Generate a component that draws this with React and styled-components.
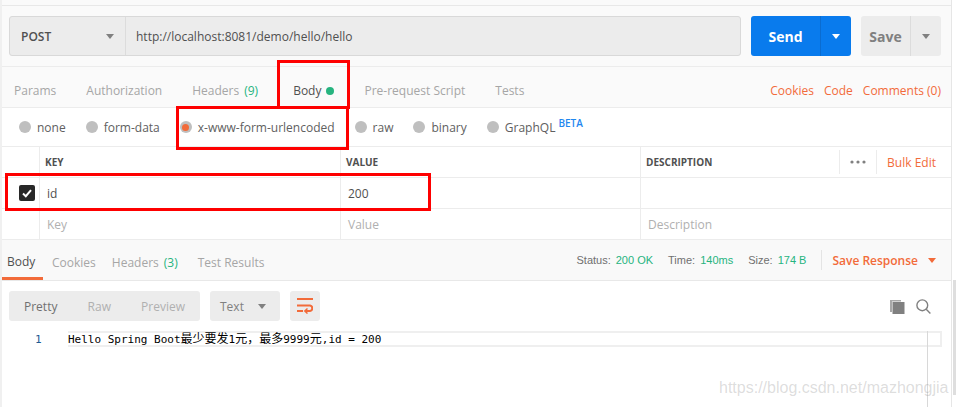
import React from 'react'
import styled, { createGlobalStyle } from 'styled-components'

const GlobalStyle = createGlobalStyle`
  html, body {
    margin: 0;
    padding: 0;
    background: #fff;
  }
  * {
    box-sizing: border-box;
  }
`

const Page = styled.div`
  position: relative;
  width: 956px;
  height: 407px;
  overflow: hidden;
  background: #fff;
  font-family: "Open Sans", "Noto Sans", sans-serif;
  font-size: 12px;
  color: #808080;
`

const Shell = styled.div`
  width: 952px;
  height: 407px;
  border-right: 1px solid #e6e6e6;
  border-left: 2px solid #f0f0f0;
`

const TopStrip = styled.div`
  height: 6px;
  background: #fafafa;
  border-bottom: 1px solid #e8e8e8;
`

const RequestBar = styled.div`
  display: flex;
  height: 61px;
  padding: 10px 0 0 7px;
  background: #fafafa;
  border-bottom: 1px solid #ececec;
`

const UrlGroup = styled.div`
  display: flex;
  width: 732px;
  height: 40px;
  border: 1px solid #d9d9d9;
  border-radius: 3px;
  background: #ececec;
`

const Method = styled.div`
  display: flex;
  align-items: center;
  justify-content: space-between;
  width: 116px;
  padding: 0 11px 0 11px;
  border-right: 1px solid #dcdcdc;
  font-size: 12px;
  font-weight: 600;
  color: #505050;
`

const UrlText = styled.div`
  display: flex;
  align-items: center;
  padding-left: 10px;
  font-size: 12px;
  color: #505050;
`

const Caret = styled.span`
  display: inline-block;
  width: 0;
  height: 0;
  border-left: 4px solid transparent;
  border-right: 4px solid transparent;
  border-top: 5px solid ${p => p.$color || '#808080'};
`

const SplitButton = styled.div`
  display: flex;
  width: ${p => p.$width}px;
  height: 40px;
  margin-left: 10px;
  border-radius: 3px;
  background: ${p => p.$bg};
  color: ${p => p.$color};
  font-size: 14px;
  font-weight: 700;
`

const SplitLabel = styled.div`
  display: flex;
  flex: 1;
  align-items: center;
  justify-content: center;
  border-right: 1px solid ${p => p.$line};
`

const SplitArrow = styled.div`
  display: flex;
  align-items: center;
  justify-content: center;
  width: 30px;
`

const TabBar = styled.div`
  display: flex;
  align-items: center;
  justify-content: space-between;
  height: 41px;
  padding: 7px 10px 0 12px;
  background: #fafafa;
  border-bottom: 1px solid #ececec;
`

const TabList = styled.div`
  display: flex;
  align-items: center;
  gap: 30px;
`

const Tab = styled.span`
  display: inline-flex;
  align-items: center;
  margin-left: ${p => (p.$active ? '5px' : '0')};
  color: ${p => (p.$active ? '#505050' : '#a6a6a6')};
  font-size: 12px;
`

const Count = styled.span`
  margin-left: 5px;
  color: #26b47f;
`

const Dot = styled.span`
  width: 8px;
  height: 8px;
  margin-left: 5px;
  border-radius: 50%;
  background: #26b47f;
`

const LinkList = styled.div`
  display: flex;
  gap: 10px;
`

const OrangeLink = styled.span`
  color: #f26b3a;
  font-size: 12px;
  font-weight: 400;
`

const RadioRow = styled.div`
  display: flex;
  align-items: center;
  gap: 20px;
  height: 39px;
  padding-left: 17px;
  border-bottom: 1px solid #ececec;
`

const RadioItem = styled.label`
  display: flex;
  align-items: center;
  gap: 6px;
  color: #606060;
  font-size: 12px;
`

const RadioMark = styled.span`
  display: flex;
  align-items: center;
  justify-content: center;
  width: 12px;
  height: 12px;
  border-radius: 50%;
  background: #bfbfbf;

  &::after {
    content: '';
    display: ${p => (p.$on ? 'block' : 'none')};
    width: 7px;
    height: 7px;
    border-radius: 50%;
    background: #f26b3a;
  }
`

const Beta = styled.sup`
  margin: -9px 0 0 -17px;
  color: #1f87ef;
  font-size: 10px;
  font-weight: 600;
  line-height: 10px;
`

const ParamRow = styled.div`
  display: grid;
  grid-template-columns: 38px 301px 300px 1fr;
  height: ${p => p.$height}px;
  border-bottom: 1px solid #ececec;
`

const Cell = styled.div`
  display: flex;
  align-items: center;
  padding-left: ${p => (p.$check ? '17px' : '7px')};
  border-right: ${p => (p.$check || p.$mid ? '1px solid #ececec' : 'none')};
  color: ${p => (p.$ghost ? '#b0b0b0' : '#505050')};
  font-size: 12px;
`

const HeadCell = styled(Cell)`
  justify-content: space-between;
  padding-left: 5px;
  color: #505050;
  font-size: 10px;
  font-weight: 700;
`

const HeadTools = styled.div`
  display: flex;
  align-items: center;
  height: 24px;
  margin-right: 15px;
`

const ToolSlot = styled.div`
  display: flex;
  align-items: center;
  height: 24px;
  padding: 0 ${p => p.$pad}px;
  border-left: 1px solid #ececec;
`

const ToolSlotLast = styled(ToolSlot)`
  padding-right: 0;
`

const CheckBox = styled.span`
  display: flex;
  align-items: center;
  justify-content: center;
  width: 16px;
  height: 16px;
  border-radius: 2px;
  background: #282828;
`

const ResponseHead = styled.div`
  display: flex;
  align-items: center;
  justify-content: space-between;
  height: 41px;
  background: #f9f9f9;
  border-bottom: 1px solid #e8e8e8;
`

const ResponseTabs = styled.div`
  display: flex;
  align-self: stretch;
  gap: 16px;
`

const ResponseTab = styled.span`
  display: flex;
  align-items: center;
  height: 40px;
  padding-top: 5px;
  color: #a6a6a6;
  font-size: 12px;
`

const ResponseTabFirst = styled(ResponseTab)`
  width: 41px;
  margin-right: -7px;
  padding: 5px 0 0 5px;
  border-bottom: 3px solid #f26b3a;
  color: #505050;
`

const ResponseTabLast = styled(ResponseTab)`
  margin-left: 4px;
`

const StatusBar = styled.div`
  display: flex;
  align-items: center;
  margin-right: 15px;
  font-family: "Liberation Sans", Arial, sans-serif;
  font-size: 11px;
`

const StatusLabel = styled.span`
  margin-left: ${p => (p.$first ? '0' : '15px')};
  color: #707070;
`

const StatusValue = styled.span`
  margin-left: 5px;
  color: #26b47f;
`

const SaveResponse = styled.div`
  display: flex;
  align-items: center;
  gap: 10px;
  height: 20px;
  margin-left: 15px;
  padding-left: 10px;
  border-left: 1px solid #e4e4e4;
  color: #f26b3a;
  font-family: "Open Sans", sans-serif;
  font-size: 12px;
  font-weight: 600;
`

const Toolbar = styled.div`
  display: flex;
  align-items: center;
  gap: 10px;
  height: 50px;
  padding: 0 0 0 7px;
`

const Segment = styled.div`
  display: flex;
  align-items: center;
  justify-content: ${p => p.$justify || 'center'};
  width: ${p => p.$width}px;
  height: 30px;
  padding: ${p => p.$padding || 0};
  border-radius: 3px;
  background: #ececec;
  font-size: 12px;
`

const SegmentItem = styled.span`
  color: ${p => (p.$active ? '#707070' : '#b0b0b0')};
`

const TextMode = styled.span`
  color: #808080;
`

const ToolIcons = styled.div`
  display: flex;
  align-items: center;
  gap: 11px;
  margin-left: auto;
  margin-right: 20px;
`

const CodeRow = styled.div`
  display: flex;
  padding-right: 9px;
`

const LineNumber = styled.div`
  width: 66px;
  padding: 3px 0 0 33px;
  color: #1f5a92;
  font-family: "DejaVu Sans Mono", monospace;
  font-size: 11px;
  line-height: 12px;
`

const CodeLine = styled.div`
  flex: 1;
  height: 16px;
  border: 2px solid #efefef;
  border-left: none;
  color: #000;
  font-family: "DejaVu Sans Mono", monospace;
  font-size: 11px;
  line-height: 10px;
  white-space: pre;
`

const Han = styled.span`
  font-family: "Noto Sans CJK SC", sans-serif;
  font-size: 12px;
`

const Ruler = styled.div`
  position: absolute;
  left: 927px;
  top: 331px;
  width: 1px;
  height: 76px;
  background: #d8d8d8;
`

const ScrollEdge = styled.div`
  position: absolute;
  left: 953px;
  top: 280px;
  width: 3px;
  height: 115px;
  background: #dedede;
`

const Watermark = styled.div`
  position: absolute;
  left: 719px;
  top: 379px;
  color: rgba(150, 150, 150, 0.32);
  font-family: "Liberation Sans", Arial, sans-serif;
  font-size: 16px;
  line-height: 18px;
`

const RedBox = styled.div`
  position: absolute;
  left: ${p => p.$x}px;
  top: ${p => p.$y}px;
  width: ${p => p.$w}px;
  height: ${p => p.$h}px;
  border: 3px solid #fe0000;
`

const CheckIcon = () => (
  <svg width="12" height="12" viewBox="0 0 12 12">
    <path d="M2 6.5 L4.8 9.2 L10 3.2" fill="none" stroke="#fff" strokeWidth="2" />
  </svg>
)

const WrapIcon = () => (
  <svg width="16" height="16" viewBox="0 0 16 16" fill="none" stroke="#f26b3a" strokeWidth="2">
    <path d="M0 1 H16" />
    <path d="M0 7.5 H13 A2.8 2.8 0 0 1 13 13 H8" />
    <path d="M10.5 10.5 L7.8 13 L10.5 15.5" strokeWidth="1.5" />
    <path d="M0 13 H6" />
  </svg>
)

const CopyIcon = () => (
  <svg width="15" height="15" viewBox="0 0 15 15">
    <path d="M0 1 H11 V2.5 H2 V13 H0 Z" fill="#a8a8a8" />
    <rect x="2.5" y="3" width="12" height="12" fill="#808080" />
  </svg>
)

const SearchIcon = () => (
  <svg width="15" height="15" viewBox="0 0 15 15" fill="none" stroke="#808080" strokeWidth="1.4">
    <circle cx="6.3" cy="6.3" r="5.4" />
    <path d="M10.2 10.2 L14.4 14.4" />
  </svg>
)

const MoreDots = () => (
  <svg width="16" height="4" viewBox="0 0 16 4" fill="#808080">
    <circle cx="2" cy="2" r="1.6" />
    <circle cx="8" cy="2" r="1.6" />
    <circle cx="14" cy="2" r="1.6" />
  </svg>
)

const App = () => {
  return (
    <Page>
      <GlobalStyle />
      <Shell>
        <TopStrip />
        <RequestBar>
          <UrlGroup>
            <Method>
              POST
              <Caret />
            </Method>
            <UrlText>http://localhost:8081/demo/hello/hello</UrlText>
          </UrlGroup>
          <SplitButton $width={100} $bg="#097bed" $color="#fff">
            <SplitLabel $line="#0a6cd0">Send</SplitLabel>
            <SplitArrow>
              <Caret $color="#fff" />
            </SplitArrow>
          </SplitButton>
          <SplitButton $width={80} $bg="#ececec" $color="#808080">
            <SplitLabel $line="#dcdcdc">Save</SplitLabel>
            <SplitArrow>
              <Caret />
            </SplitArrow>
          </SplitButton>
        </RequestBar>

        <TabBar>
          <TabList>
            <Tab>Params</Tab>
            <Tab>Authorization</Tab>
            <Tab>
              Headers<Count>(9)</Count>
            </Tab>
            <Tab $active>
              Body<Dot />
            </Tab>
            <Tab>Pre-request Script</Tab>
            <Tab>Tests</Tab>
          </TabList>
          <LinkList>
            <OrangeLink>Cookies</OrangeLink>
            <OrangeLink>Code</OrangeLink>
            <OrangeLink>Comments (0)</OrangeLink>
          </LinkList>
        </TabBar>

        <RadioRow>
          <RadioItem><RadioMark />none</RadioItem>
          <RadioItem><RadioMark />form-data</RadioItem>
          <RadioItem><RadioMark $on />x-www-form-urlencoded</RadioItem>
          <RadioItem><RadioMark />raw</RadioItem>
          <RadioItem><RadioMark />binary</RadioItem>
          <RadioItem><RadioMark />GraphQL</RadioItem>
          <Beta>BETA</Beta>
        </RadioRow>

        <ParamRow $height={31}>
          <Cell $check />
          <HeadCell $mid>KEY</HeadCell>
          <HeadCell $mid>VALUE</HeadCell>
          <HeadCell>
            DESCRIPTION
            <HeadTools>
              <ToolSlot $pad={10}><MoreDots /></ToolSlot>
              <ToolSlotLast $pad={10}><OrangeLink>Bulk Edit</OrangeLink></ToolSlotLast>
            </HeadTools>
          </HeadCell>
        </ParamRow>
        <ParamRow $height={31}>
          <Cell $check><CheckBox><CheckIcon /></CheckBox></Cell>
          <Cell $mid>id</Cell>
          <Cell $mid>200</Cell>
          <Cell />
        </ParamRow>
        <ParamRow $height={31}>
          <Cell $check />
          <Cell $mid $ghost>Key</Cell>
          <Cell $mid $ghost>Value</Cell>
          <Cell $ghost>Description</Cell>
        </ParamRow>

        <ResponseHead>
          <ResponseTabs>
            <ResponseTabFirst>Body</ResponseTabFirst>
            <ResponseTab>Cookies</ResponseTab>
            <ResponseTab>Headers<Count>(3)</Count></ResponseTab>
            <ResponseTabLast>Test Results</ResponseTabLast>
          </ResponseTabs>
          <StatusBar>
            <StatusLabel $first>Status:</StatusLabel>
            <StatusValue>200 OK</StatusValue>
            <StatusLabel>Time:</StatusLabel>
            <StatusValue>140ms</StatusValue>
            <StatusLabel>Size:</StatusLabel>
            <StatusValue>174 B</StatusValue>
            <SaveResponse>
              Save Response
              <Caret $color="#f26b3a" />
            </SaveResponse>
          </StatusBar>
        </ResponseHead>

        <Toolbar>
          <Segment $width={191} $justify="space-between" $padding="0 15px">
            <SegmentItem $active>Pretty</SegmentItem>
            <SegmentItem>Raw</SegmentItem>
            <SegmentItem>Preview</SegmentItem>
          </Segment>
          <Segment $width={70} $justify="space-between" $padding="0 14px 0 10px">
            <TextMode>Text</TextMode>
            <Caret />
          </Segment>
          <Segment $width={30}><WrapIcon /></Segment>
          <ToolIcons>
            <CopyIcon />
            <SearchIcon />
          </ToolIcons>
        </Toolbar>

        <CodeRow>
          <LineNumber>1</LineNumber>
          <CodeLine>Hello Spring Boot<Han>最少要发</Han>1<Han>元，最多</Han>9999<Han>元</Han>,id = 200</CodeLine>
        </CodeRow>
      </Shell>

      <Ruler />
      <ScrollEdge />
      <Watermark>https://blog.csdn.net/mazhongjia</Watermark>
      <RedBox $x={277} $y={60} $w={73} $h={49} />
      <RedBox $x={176} $y={106} $w={173} $h={44} />
      <RedBox $x={5} $y={173} $w={426} $h={38} />
    </Page>
  )
}

export default App
